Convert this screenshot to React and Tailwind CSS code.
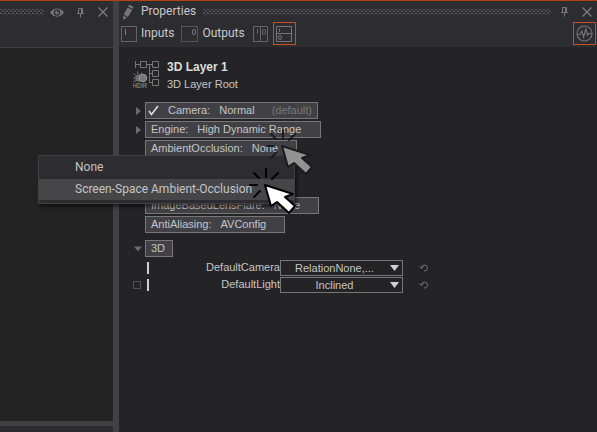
import React from "react";

const ui = "font-['Roboto','Noto_Sans',sans-serif]";
const grid = "font-['Liberation_Sans',Arial,sans-serif]";

function Grip() {
  return (
    <svg className="h-[6px] min-w-0 flex-1" aria-hidden="true">
      <defs>
        <pattern id="grip" width="4" height="4" patternUnits="userSpaceOnUse">
          <rect width="2" height="1" x="0" y="0" fill="#56565a" />
          <rect width="2" height="1" x="2" y="2" fill="#56565a" />
          <rect width="2" height="1" x="2" y="1" fill="#3f3f43" />
          <rect width="2" height="1" x="0" y="3" fill="#3f3f43" />
        </pattern>
      </defs>
      <rect width="100%" height="6" fill="url(#grip)" />
    </svg>
  );
}

function Pin() {
  return (
    <button aria-label="Pin" className="text-[#77777a]">
      <svg width="9" height="11" viewBox="0 0 9 11" fill="none" stroke="currentColor">
        <path d="M2.5 6V1.5H6.5V6M1 6.5H8M4.5 7V10.5" />
        <path d="M5.5 1.5V6" />
      </svg>
    </button>
  );
}

function Close() {
  return (
    <button aria-label="Close" className="text-[#7c7c7f]">
      <svg width="10" height="10" viewBox="0 0 10 10" stroke="currentColor" strokeWidth="1.3">
        <path d="M0.5 0.5L9.5 9.5M9.5 0.5L0.5 9.5" />
      </svg>
    </button>
  );
}

function Eye() {
  return (
    <button aria-label="Show" className="text-[#737377]">
      <svg width="14" height="9" viewBox="0 0 14 9">
        <path d="M0 4.5C3-1 11-1 14 4.5C11 10 3 10 0 4.5Z" fill="currentColor" />
        <circle cx="7" cy="4.5" r="3.2" fill="#2d2d31" />
        <circle cx="7" cy="4.5" r="2" fill="currentColor" />
        <circle cx="7.8" cy="3.7" r="0.8" fill="#2d2d31" />
      </svg>
    </button>
  );
}

function Pencil() {
  return (
    <svg width="12" height="16" viewBox="0 0 12 16" fill="#77777a" aria-hidden="true">
      <path d="M7.2 0.6L11.6 3L10.6 5L6.2 2.5Z" />
      <path d="M5.7 3.4L10.1 5.9L6 13L1.6 10.5Z" />
      <path d="M1.2 11.4L5.1 13.7L1 15.8Z" />
    </svg>
  );
}

function InputsIcon() {
  return (
    <svg width="16" height="16" viewBox="0 0 16 16" fill="none" stroke="#66666a" aria-hidden="true">
      <rect x="0.5" y="0.5" width="15" height="15" />
      <path d="M4.5 3V9" stroke="#808083" />
    </svg>
  );
}

function OutputsIcon() {
  return (
    <svg width="17" height="16" viewBox="0 0 17 16" fill="none" stroke="#55555a" aria-hidden="true">
      <rect x="0.5" y="0.5" width="16" height="15" />
      <rect x="11.5" y="3.5" width="3" height="5" rx="1.5" stroke="#77777a" />
    </svg>
  );
}

function ColumnsIcon() {
  return (
    <svg width="15" height="16" viewBox="0 0 15 16" fill="none" stroke="#66666a" aria-hidden="true">
      <path d="M0.5 0.5H14.5V15.5H0.5ZM7.5 0.5V15.5" />
      <path d="M4.5 3V8" />
      <rect x="9.5" y="3.5" width="3" height="5" rx="1.5" />
    </svg>
  );
}

function RowsIcon() {
  return (
    <svg width="16" height="16" viewBox="0 0 16 16" fill="none" stroke="#77777a" aria-hidden="true">
      <path d="M0.5 0.5H15.5V15.5H0.5ZM0.5 7.5H15.5" />
      <path d="M3.5 2.5V6" />
      <rect x="2.5" y="9.5" width="3" height="4" rx="1.5" />
    </svg>
  );
}

function PulseIcon() {
  return (
    <svg width="17" height="17" viewBox="0 0 17 17" fill="none" stroke="#737378" strokeWidth="1.2" aria-hidden="true">
      <circle cx="8.5" cy="8.5" r="7.5" />
      <path d="M1.5 9.5H4L5.8 6L7.6 12L9.8 4L11.5 10L12.8 8.5H15.5" />
    </svg>
  );
}

function LayerIcon() {
  return (
    <svg className="shrink-0" width="29" height="30" viewBox="0 0 29 30" fill="none" stroke="#77777a" aria-hidden="true">
      <path d="M2.5 2V9M2.5 5.5H7.5M7.5 2.5H13.5V8.5H7.5ZM13.5 5.5H19.5M19.5 2.5H25.5V8.5H19.5ZM16.5 5.5V23.5H19.5M16.5 14.5H19.5M19.5 11.5H25.5V17.5H19.5ZM19.5 20.5H25.5V26.5H19.5Z" />
      <circle cx="6" cy="19" r="3.8" fill="#6c6c6f" stroke="none" />
      <path d="M-1 19H2M0.5 14.5L3 16.5M4.5 12.5L5 15M9 13.5L8 15.5M0.5 23L3 21.5" />
      <circle cx="10" cy="19" r="3.7" fill="#77777a" stroke="#9a9a9c" />
      <text x="-1" y="29" fill="#77777a" stroke="none" fontSize="7" fontWeight="700" fontFamily="Liberation Sans">HDR</text>
    </svg>
  );
}

function Arrow({ open }) {
  return (
    <button aria-label="Toggle" className="flex w-[9px] shrink-0 justify-center">
      <svg width="8" height="8" viewBox="0 0 8 8" fill="#6c6c6f">
        <path d={open ? "M0 1.5H8L4 6.5Z" : "M2 0L7 4L2 8Z"} />
      </svg>
    </button>
  );
}

function Cursor({ faded }) {
  return (
    <svg width="50" height="50" viewBox="0 0 50 50" stroke={faded ? "#1c1c1d" : "#000"} strokeLinecap="round" aria-hidden="true">
      <path d="M18 2V10M6 6L11 11M30 6L24 12M2 18H9M6 30L12 24" strokeWidth="2" fill="none" />
      <path d="M17 18L23 39L29 35L41 46L47 39L37 30L45 27Z" fill={faded ? "#929293" : "#fff"} strokeWidth="2" strokeLinejoin="round" />
    </svg>
  );
}

const tag = "h-[17px] border border-[#77777a] bg-[#414145] text-left whitespace-pre";

function Row({ name, value, width, arrow, children }) {
  return (
    <div className="relative flex items-center gap-[3px]">
      {arrow ? <Arrow /> : <span className="w-[9px]" />}
      <button className={`${tag} ${width} flex items-center gap-[9px] px-[5px]`}>
        <span>{name}:</span>
        <span>{value}</span>
      </button>
      {children}
    </div>
  );
}

function Setting({ id, label, value, box }) {
  return (
    <div className="flex h-[17px] items-center">
      <span className="flex w-[14px] shrink-0">
        {box && <input type="checkbox" aria-label={label} className="size-[8px] appearance-none border border-[#505053]" />}
      </span>
      <span className="h-[12px] w-[2px] shrink-0 bg-[#d0d0d0]" />
      <label htmlFor={id} className="w-[131px] shrink-0 text-right">{label}</label>
      <div className="relative h-[16px] w-[123px] shrink-0">
        <select id={id} className="block size-full appearance-none border border-[#77777a] bg-[#242427] pr-[14px] text-center leading-[14px] [text-align-last:center]">
          <option>{value}</option>
        </select>
        <svg className="pointer-events-none absolute top-[5px] right-[4px]" width="9" height="6" viewBox="0 0 9 6" fill="#d0d0d0" aria-hidden="true">
          <path d="M0 0H9L4.5 6Z" />
        </svg>
      </div>
      <button aria-label={`Reset ${label}`} className="ml-4">
        <svg width="9" height="8" viewBox="0 0 9 8" fill="none" stroke="#707073">
          <path d="M2.5 4A3 3 0 1 1 5 7M0.5 2.5L2.5 4.5L4.5 2.5" />
        </svg>
      </button>
    </div>
  );
}

export default function App() {
  return (
    <div className={`flex h-screen overflow-hidden border-t border-[#b5420f] bg-[#242427] text-[12px] leading-[15px] text-[#c4c4c6] ${ui}`}>
      <aside className="flex w-[113px] shrink-0 flex-col bg-[#232323]">
        <header className="h-[47px] border-b border-[#3f3f43] bg-[#2d2d31]">
          <div className="flex h-[22px] items-center pr-[5px]">
            <Grip />
            <div className="ml-[6px] flex items-center gap-[12px]">
              <Eye />
              <Pin />
            </div>
            <div className="ml-[13px] flex"><Close /></div>
          </div>
        </header>
        <div className="flex-1" />
        <footer className="h-[11px] border-t-[5px] border-[#414143] bg-[#2d2d31]" />
      </aside>
      <div className="w-[6px] shrink-0 bg-[#414143]" />
      <main className="flex min-w-0 flex-1 flex-col">
        <header className="h-[46px] bg-[#2d2d31] text-[#c8c8ca]">
          <div className="flex h-[21px] items-center pr-[5px] pl-[3px]">
            <Pencil />
            <h1 className="mr-[7px] ml-[7px]">Properties</h1>
            <Grip />
            <div className="ml-[9px] flex"><Pin /></div>
            <div className="ml-[13px] flex"><Close /></div>
          </div>
          <div className="flex h-[23px] items-center pl-[2px]">
            <button className="flex items-center gap-1"><InputsIcon />Inputs</button>
            <button className="ml-[7px] flex items-center gap-1"><OutputsIcon />Outputs</button>
            <button aria-label="Columns" className="ml-2"><ColumnsIcon /></button>
            <button aria-label="Rows" className="ml-[5px] flex size-[23px] items-center justify-center border border-[#c9501c]"><RowsIcon /></button>
            <button aria-label="Activity" className="mr-[1px] ml-auto flex size-[23px] items-center justify-center border border-[#c9501c]"><PulseIcon /></button>
          </div>
        </header>
        <section className={`px-[14px] pt-[12px] text-[11px] ${grid}`}>
          <div className="flex gap-[5px]">
            <LayerIcon />
            <div className="leading-[17px]">
              <h2 className="text-[12px] font-bold text-[#dcdcdc]">3D Layer 1</h2>
              <p>3D Layer Root</p>
            </div>
          </div>
          <div className="mt-[9px] flex flex-col gap-[2px]">
            <div className="flex items-center gap-[3px]">
              <Arrow />
              <button className={`${tag} flex w-[173px] items-center pr-[5px] pl-[2px]`}>
                <svg width="11" height="11" viewBox="0 0 11 11" fill="none" stroke="#e0e0e0" strokeWidth="1.6" aria-hidden="true">
                  <path d="M1 6L3.5 9.5L10 1" />
                </svg>
                <span className="ml-[9px]">Camera:</span>
                <span className="ml-[9px]">Normal</span>
                <span className="ml-auto text-[#77777a]">(default)</span>
              </button>
            </div>
            <Row name="Engine" value="High Dynamic Range" width="w-[176px]" arrow />
            <Row name="AmbientOcclusion" value="None" width="w-[152px]">
              <div role="menu" className={`absolute top-[15px] left-[-95px] z-10 w-[257px] border border-[#414145] bg-[#2d2d31] pb-[3px] text-[12px] shadow-[2px_3px_3px_rgba(0,0,0,0.5)] ${ui}`}>
                <button role="menuitem" className="block h-[23px] w-full pl-[36px] text-left">None</button>
                <button role="menuitem" className="block h-[21px] w-full bg-[#464649] pl-[36px] text-left">Screen-Space Ambient-Occlusion</button>
              </div>
              <div className="pointer-events-none absolute top-[-12px] left-[132px] z-20"><Cursor faded /></div>
              <div className="pointer-events-none absolute top-[27px] left-[115px] z-20"><Cursor /></div>
            </Row>
            <div className="mt-[38px]">
              <Row name="ImageBasedLensFlare" value="None" width="w-[174px]" />
            </div>
            <Row name="AntiAliasing" value="AVConfig" width="w-[140px]" />
          </div>
          <div className="mt-[7px] flex items-center gap-[3px]">
            <Arrow open />
            <button className={`${tag} flex w-[28px] items-center px-[5px]`}>3D</button>
          </div>
          <div className="mt-[2px]">
            <Setting id="camera" label="DefaultCamera" value="RelationNone,..." />
            <Setting id="light" label="DefaultLight" value="Inclined" box />
          </div>
        </section>
      </main>
    </div>
  );
}
